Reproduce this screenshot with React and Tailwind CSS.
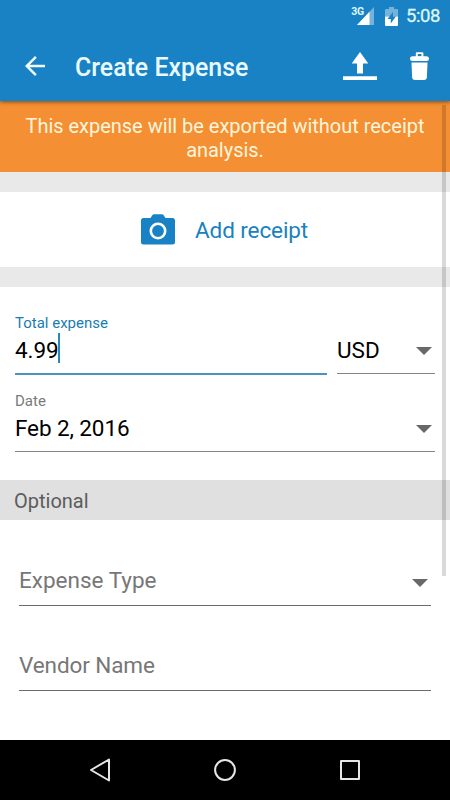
import { useState } from 'react';

function Caret() {
  return (
    <svg className="w-4 h-2 shrink-0 mt-[2px]" viewBox="0 0 16 8" fill="#686868">
      <path d="M0 0h16L8 8z" />
    </svg>
  );
}

function StatusBar() {
  return (
    <div className="h-8 flex items-center justify-end pr-[10px] text-[#dff6ff]">
      <span className="text-[10.500px] font-bold leading-none mb-[8px] -mr-[7px] tracking-[-0.3px]">3G</span>
      <svg className="w-[17px] h-[18px]" viewBox="0 0 17 18">
        <path d="M17 0v18H0z" fill="#fff" fillOpacity="0.4" />
        <path d="M12.500 4.700V18H0z" fill="#fff" />
      </svg>
      <svg className="w-[13px] h-[19px] ml-[11px]" viewBox="0 0 13 19">
        <path d="M4 0h5v2h3a1 1 0 0 1 1 1v6.500H0V3a1 1 0 0 1 1-1h3z" fill="#fff" fillOpacity="0.4" />
        <path d="M0 9.500h13V18a1 1 0 0 1-1 1H1a1 1 0 0 1-1-1z" fill="#fff" />
        <path d="M8 5 2.500 12h3.300v4.500L10.800 9.500H8z" fill="#1882c5" />
      </svg>
      <span className="text-[18.500px] leading-none ml-[8px] tracking-[-0.4px] [-webkit-text-stroke:0.3px]">5:08</span>
    </div>
  );
}

function Header() {
  return (
    <header className="relative z-10 h-[101px] shrink-0 bg-[#1882c5] shadow-[0_1px_4px_rgba(0,0,0,0.5)]">
      <StatusBar />
      <div className="h-[69px] flex items-center pl-[25px] pr-[21px]">
        <svg className="w-5 h-5 mb-px" viewBox="4 4 16 16" fill="#f0fcff">
          <path d="M20 11H7.830l5.590-5.590L12 4l-8 8 8 8 1.410-1.410L7.830 13H20z" />
        </svg>
        <h1 className="flex-1 ml-[30px] pt-[3px] text-[24.900px] font-medium leading-none text-[#e8faff]">
          Create Expense
        </h1>
        <svg className="w-[34px] h-[28px] mb-[2px]" viewBox="0 0 34 28" fill="#fff">
          <path d="M17 0l8.300 11.500H20V21.500h-6v-10H8.700z" />
          <path d="M0 24.300h34V28H0z" />
        </svg>
        <svg className="w-[19px] h-[28px] ml-[33px] mb-[2px]" viewBox="0 0 19 28" fill="#fff">
          <path fillRule="evenodd" d="M5.800 5V1.200a1 1 0 0 1 1-1h5.600a1 1 0 0 1 1 1V5zM7.800 2v2.500h3.600V2z" />
          <path d="M2.500 4.300h14A2.500 2.500 0 0 1 19 6.800a2.300 2.300 0 0 1-2.300 2.300H2.300A2.300 2.300 0 0 1 0 6.800a2.500 2.500 0 0 1 2.500-2.500z" />
          <path d="M1.500 10.600h16l-.6 14.600a3 3 0 0 1-3 2.800H5.100a3 3 0 0 1-3-2.800z" />
        </svg>
      </div>
    </header>
  );
}

function NavBar() {
  return (
    <nav className="h-[60px] shrink-0 bg-black flex items-center justify-between pl-[90px] pr-[90px]">
      <svg className="w-5 h-6" viewBox="0 0 20 24" fill="none" stroke="#e6e6e6" strokeWidth="2" strokeLinejoin="round">
        <path d="M19 1.500v21L1 12z" />
      </svg>
      <svg className="w-[22px] h-[22px]" viewBox="0 0 22 22" fill="none" stroke="#e6e6e6" strokeWidth="2">
        <circle cx="11" cy="11" r="9.900" />
      </svg>
      <svg className="w-5 h-5" viewBox="0 0 20 20" fill="none" stroke="#e6e6e6" strokeWidth="2" strokeLinejoin="round">
        <path d="M1 1h18v18H1z" />
      </svg>
    </nav>
  );
}

export default function App() {
  const [expense] = useState({
    total: '4.99',
    currency: 'USD',
    date: 'Feb 2, 2016',
  });

  return (
    <div className="w-[450px] h-[800px] flex flex-col overflow-hidden bg-white font-['Roboto',sans-serif]">
      <Header />

      <main className="relative flex-1">
        <div className="h-[71px] bg-[#f58f33] pt-[13px] text-center text-[20px] leading-[24px] tracking-[-0.020px] text-[#fff6dc]">
          This expense will be exported without receipt
          <br />
          analysis.
        </div>
        <div className="h-5 bg-[#e9e9e9]" />

        {/* Receipt */}
        <button type="button" className="w-full h-[75px] flex items-center pl-[141px] text-[#1882c0]">
          <svg className="w-[34px] h-[31px]" viewBox="0 0 34 31">
            <path
              d="M2.500 4H9.500l2-3a2 2 0 0 1 1.500-.7h8a2 2 0 0 1 1.500.7l2 3h7A2.500 2.500 0 0 1 34 6.500v21.500a2.500 2.500 0 0 1-2.500 2.500h-29A2.500 2.500 0 0 1 0 28V6.500A2.500 2.500 0 0 1 2.500 4z"
              fill="#1882c5"
            />
            <circle cx="17" cy="17" r="7.200" fill="none" stroke="#fff" strokeWidth="2.600" />
          </svg>
          <span className="ml-[20px] pt-[2px] text-[22.500px] leading-none tracking-[-0.1px]">Add receipt</span>
        </button>
        <div className="h-5 bg-[#e9e9e9]" />

        {/* Amount and date */}
        <div className="h-[193px] px-[15px] pt-[27px]">
          <div className="flex gap-[10px]">
            <div className="w-[312px] h-[61px] border-b-2 border-[#4795be]">
              <div className="text-[15px] leading-[18px] text-[#1a7cb2]">Total expense</div>
              <div className="flex items-center h-[36px] text-[22.500px] leading-none tracking-[-0.1px] text-black">
                {expense.total}
                <span className="w-[2px] h-[30px] -mt-[4px] bg-[#2888bc]" />
              </div>
            </div>
            <div className="w-[98px] h-[60px] pt-[18px] border-b border-[#858585]">
              <div className="flex items-center justify-between h-[36px] pr-[3px] text-[22.500px] leading-none text-black">
                {expense.currency}
                <Caret />
              </div>
            </div>
          </div>
          <div className="h-[60px] mt-[17px] border-b border-[#858585]">
            <div className="text-[15px] leading-[18px] text-[#7a7a7a]">Date</div>
            <div className="flex items-center justify-between h-[36px] pr-[3px] text-[22.500px] leading-none tracking-[-0.1px] text-black">
              {expense.date}
              <Caret />
            </div>
          </div>
        </div>

        <div className="h-10 flex items-center pt-[2px] pl-[14px] bg-[#e0e0e0] text-[20px] text-[#5c5c5c]">Optional</div>

        {/* Optional fields */}
        <div className="px-[19px] text-[22.500px] leading-none text-[#777]">
          <div className="h-[86px] pt-[33px] border-b border-[#6c6c6c]">
            <div className="flex items-end justify-between pt-[16px] pr-[3px]">
              Expense Type
              <div className="pb-[5px]">
                <Caret />
              </div>
            </div>
          </div>
          <div className="h-[85px] pt-[48px] border-b border-[#6c6c6c] tracking-[-0.1px]">Vendor Name</div>
        </div>

        <div className="absolute top-[4px] right-[4px] w-[4px] h-[471px] bg-black/15" />
      </main>

      <NavBar />
    </div>
  );
}
